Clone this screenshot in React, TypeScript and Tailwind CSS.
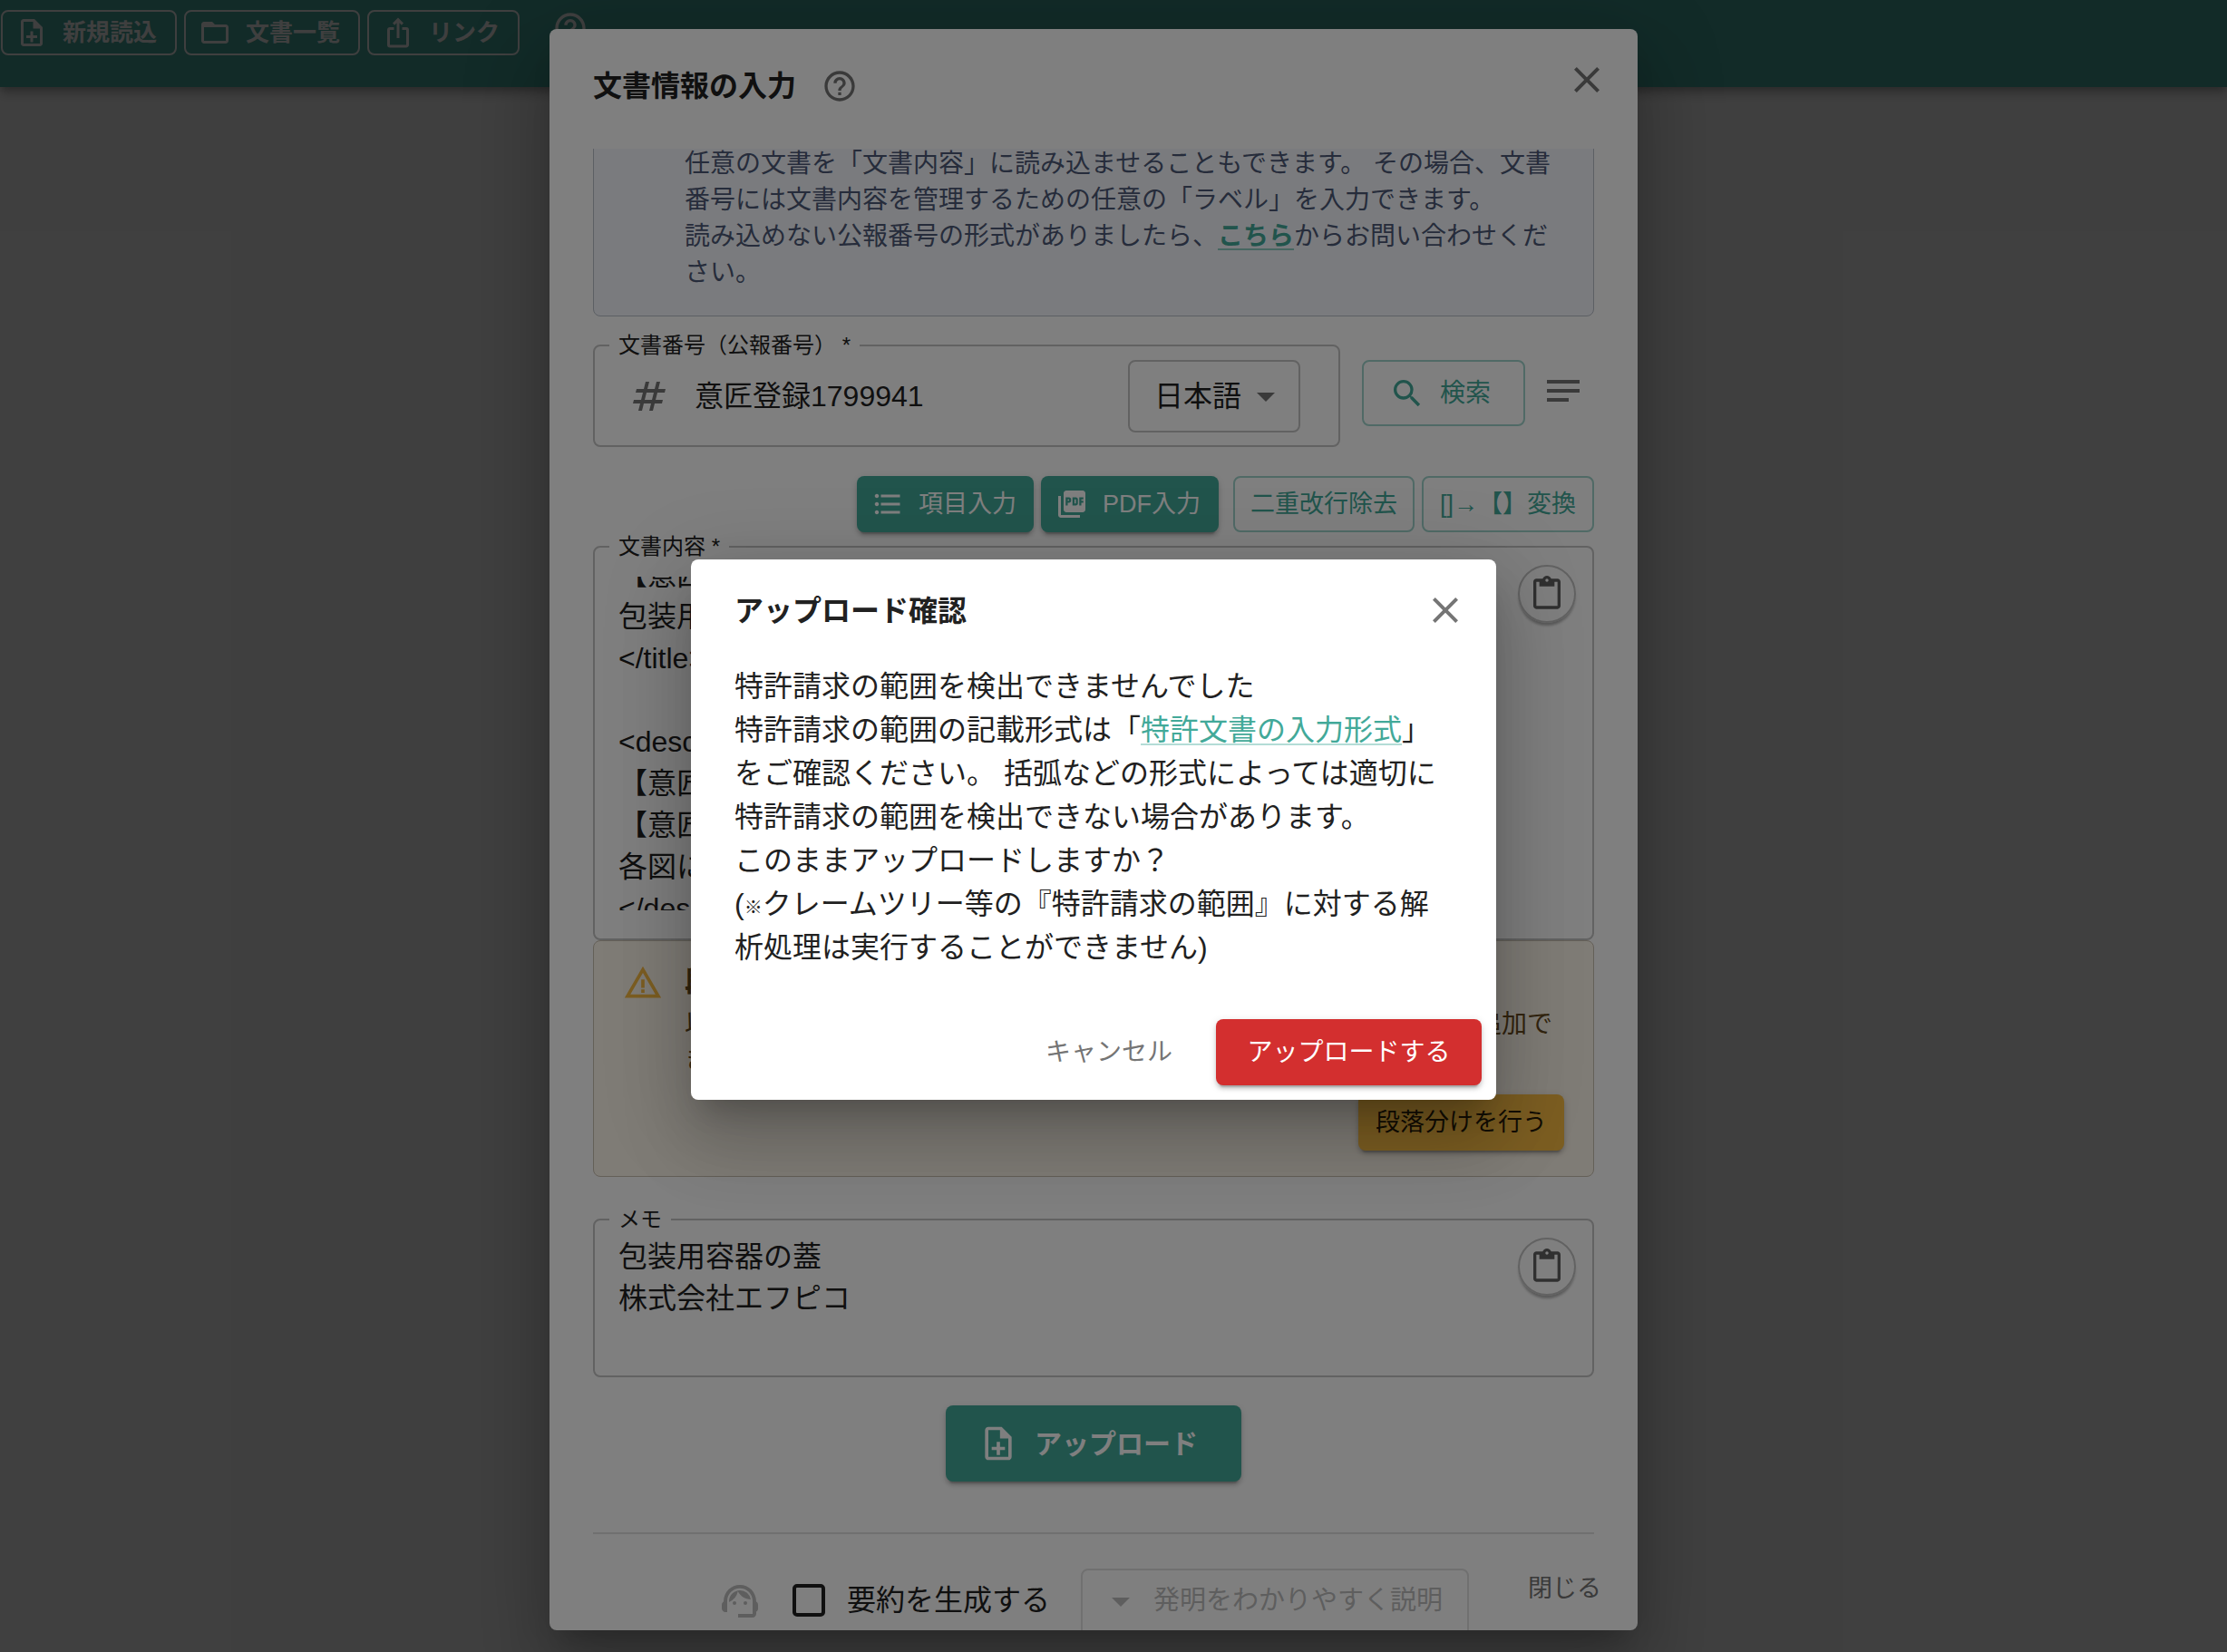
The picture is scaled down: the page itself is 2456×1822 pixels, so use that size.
import type { ReactNode } from "react";
import {
  MdArrowDropDown,
  MdClose,
  MdFolderOpen,
  MdFormatListBulleted,
  MdHelpOutline,
  MdIosShare,
  MdNotes,
  MdNumbers,
  MdOutlineContentPaste,
  MdOutlineNoteAdd,
  MdPictureAsPdf,
  MdSearch,
  MdSupportAgent,
  MdWarningAmber,
} from "react-icons/md";

const CONTENT = `【意匠に係る物品】
包装用容器の蓋
</title>

<description>
【意匠に係る物品の説明】
【意匠の説明】
各図において省略
</description>`;

const MEMO = `包装用容器の蓋
株式会社エフピコ`;

const PAPER_SHADOW =
  "shadow-[0px_22px_30px_-14px_rgba(0,0,0,0.2),0px_48px_76px_6px_rgba(0,0,0,0.14),0px_18px_92px_16px_rgba(0,0,0,0.12)]";
const BUTTON_SHADOW =
  "shadow-[0px_6px_2px_-4px_rgba(0,0,0,0.2),0px_4px_4px_0px_rgba(0,0,0,0.14),0px_2px_10px_0px_rgba(0,0,0,0.12)]";
const LINK =
  "text-[#42a999] underline decoration-2 underline-offset-4 [text-decoration-skip-ink:none]";

function HeaderButton({ icon, children }: { icon: ReactNode; children: ReactNode }) {
  return (
    <button className="flex h-[50px] items-center gap-4 rounded-lg border-2 border-white pl-[14px] pr-5 text-[26px] font-bold leading-none">
      {icon}
      <span>{children}</span>
    </button>
  );
}

function Field({
  id,
  label,
  className = "",
  children,
}: {
  id: string;
  label: string;
  className?: string;
  children: ReactNode;
}) {
  return (
    <fieldset className={`relative min-w-0 rounded-lg border-2 border-[#c4c4c4] px-4 ${className}`}>
      <legend className="px-[10px] text-[24px] leading-9">
        <label htmlFor={id}>{label}</label>
      </legend>
      {children}
    </fieldset>
  );
}

function PasteButton() {
  return (
    <button
      aria-label="貼り付け"
      className="mr-[2px] flex size-16 shrink-0 items-center justify-center rounded-full border-2 border-[#c4c4c4] text-[#616161] shadow-[0px_4px_3px_-1px_rgba(0,0,0,0.3)]"
    >
      <MdOutlineContentPaste className="size-10" />
    </button>
  );
}

function Header() {
  return (
    <header className="flex h-24 items-start gap-2 bg-[#48aca0] pl-[1px] pt-[11px] text-white shadow-[0px_4px_8px_-2px_rgba(0,0,0,0.2),0px_8px_10px_0px_rgba(0,0,0,0.14),0px_2px_20px_0px_rgba(0,0,0,0.12)]">
      <HeaderButton icon={<MdOutlineNoteAdd className="size-9" />}>新規読込</HeaderButton>
      <HeaderButton icon={<MdFolderOpen className="size-9" />}>文書一覧</HeaderButton>
      <HeaderButton icon={<MdIosShare className="size-9" />}>リンク</HeaderButton>
      <button aria-label="ヘルプ" className="ml-7">
        <MdHelpOutline className="size-10" />
      </button>
    </header>
  );
}

function DocumentDialog() {
  return (
    <section
      role="dialog"
      aria-label="文書情報の入力"
      className={`relative flex h-full w-full max-w-[1200px] flex-col overflow-hidden rounded-lg bg-white ${PAPER_SHADOW}`}
    >
      <div className="flex h-[132px] shrink-0 items-start justify-between pl-12 pr-8 pt-8">
        <div className="flex h-[62px] items-center gap-7">
          <h2 className="text-[32px] font-bold leading-[62px]">文書情報の入力</h2>
          <MdHelpOutline className="size-10 text-[#757575]" />
        </div>
        <button aria-label="閉じる" className="text-[#757575]">
          <MdClose className="size-12" />
        </button>
      </div>

      <div className="min-h-0 flex-1 overflow-hidden px-12">
        <div className="-mt-2 rounded-lg border border-[#b8bec8] bg-[#f4f7fd] pb-[27px] pl-[100px] pr-8 pt-1 text-[28px] leading-10 text-[#4d5876]">
          <p>
            任意の文書を「文書内容」に読み込ませることもできます。 その場合、文書番号には文書内容を管理するための任意の「ラベル」を入力できます。
            <br />
            読み込めない公報番号の形式がありましたら、
            <a href="#contact" className={`font-bold decoration-[#8fcdc3] ${LINK}`}>
              こちら
            </a>
            からお問い合わせください。
          </p>
        </div>

        <div className="mt-[14px] flex items-start">
          <Field id="doc-number" label="文書番号（公報番号） *" className="h-[130px] w-[824px]">
            <div className="-mt-[2px] flex items-center pl-5 pr-[26px]">
              <MdNumbers className="size-12 shrink-0 text-[#757575]" />
              <input
                id="doc-number"
                defaultValue="意匠登録1799941"
                className="ml-[26px] min-w-0 flex-1 bg-transparent text-[32px] leading-[46px] outline-none"
              />
              <div className="relative">
                <select
                  aria-label="言語"
                  className="h-20 w-[190px] appearance-none rounded-lg border-2 border-[#c4c4c4] bg-transparent pl-[27px] text-[32px] outline-none"
                >
                  <option>日本語</option>
                </select>
                <MdArrowDropDown className="pointer-events-none absolute right-[14px] top-4 size-12 text-[#757575]" />
              </div>
            </div>
          </Field>
          <button className="ml-6 mt-[34px] flex h-[73px] w-[180px] items-center justify-center gap-4 rounded-lg border-2 border-[#a0d4cc] pr-2 text-[28px] text-[#42a999]">
            <MdSearch className="size-10" />
            検索
          </button>
          <button aria-label="メニュー" className="ml-[18px] mt-11 text-[#757575]">
            <MdNotes className="size-12" />
          </button>
        </div>

        <div className="mt-8 flex h-[62px] justify-end text-[27px]">
          <button
            className={`flex w-[195px] items-center gap-4 rounded-lg bg-[#42a999] pl-4 text-white ${BUTTON_SHADOW}`}
          >
            <MdFormatListBulleted className="size-9" />
            項目入力
          </button>
          <button
            className={`ml-2 flex w-[196px] items-center gap-4 rounded-lg bg-[#42a999] pl-4 text-white ${BUTTON_SHADOW}`}
          >
            <MdPictureAsPdf className="size-9" />
            PDF入力
          </button>
          <button className="ml-4 w-[200px] rounded-lg border-2 border-[#a0d4cc] text-[#42a999]">
            二重改行除去
          </button>
          <button className="ml-2 w-[190px] rounded-lg border-2 border-[#a0d4cc] text-[#42a999]">
            []→【】変換
          </button>
        </div>

        <Field id="doc-content" label="文書内容 *" className="-mt-[2px] h-[452px]">
          <div className="flex items-start px-[10px]">
            <textarea
              id="doc-content"
              ref={(el) => {
                if (el) el.scrollTop = 25;
              }}
              defaultValue={CONTENT}
              className="mt-[15px] h-[368px] flex-1 resize-none overflow-hidden bg-transparent text-[32px] leading-[46px] outline-none"
            />
            <div className="-mr-[10px] mt-[2px]">
              <PasteButton />
            </div>
          </div>
        </Field>

        <div className="flex h-[261px] flex-col rounded-lg border border-[#c9c0b0] bg-[#fff8ec] pl-8 pr-8 text-[28px] leading-10 text-[#664a20]">
          <div className="flex gap-6 pt-6">
            <MdWarningAmber className="size-11 shrink-0 text-[#f8bc45]" />
            <div className="flex-1">
              <p className="text-[32px] font-bold">段落番号が見つかりません</p>
              <p className="mt-2">
                以下のボタンから本文の段落分けを行うことができます。 段落番号も追加できます。
              </p>
            </div>
          </div>
          <button
            className={`ml-auto mt-[17px] h-[62px] w-[227px] rounded-lg bg-[#f8bc45] text-[27px] leading-none text-black/87 ${BUTTON_SHADOW}`}
          >
            段落分けを行う
          </button>
        </div>

        <Field id="memo" label="メモ" className="mt-[29px] h-[192px]">
          <div className="flex items-start px-[10px]">
            <textarea
              id="memo"
              defaultValue={MEMO}
              className="h-36 flex-1 resize-none overflow-hidden bg-transparent text-[32px] leading-[46px] outline-none"
            />
            <div className="-mr-[10px] mt-[2px]">
              <PasteButton />
            </div>
          </div>
        </Field>

        <div className="mt-[31px] flex justify-center">
          <button
            className={`flex h-[84px] w-[326px] items-center justify-center gap-[18px] rounded-lg bg-[#42a999] pr-3 text-[30px] font-bold text-white ${BUTTON_SHADOW}`}
          >
            <MdOutlineNoteAdd className="size-11" />
            アップロード
          </button>
        </div>

        <hr className="mt-14 border-t-2 border-[#e0e0e0]" />

        <div className="ml-[138px] mt-[38px] flex items-start">
          <MdSupportAgent className="mt-3 size-12 text-[#bdbdbd]" />
          <label className="ml-[34px] mt-3 flex items-center gap-6 text-[32px] leading-[46px]">
            <input
              type="checkbox"
              className="size-9 appearance-none rounded-[5px] border-4 border-[#212121]"
            />
            要約を生成する
          </label>
          <button
            disabled
            className="ml-[34px] flex h-20 w-[428px] items-center rounded-lg border-2 border-[#e0e0e0] pb-2 pl-[18px] text-[29px] text-[#bdbdbd]"
          >
            <MdArrowDropDown className="mr-3 size-12" />
            発明をわかりやすく説明
          </button>
        </div>
      </div>

      <button className="absolute bottom-6 right-10 text-[27px] leading-[44px] text-[#757575]">
        閉じる
      </button>
    </section>
  );
}

function ConfirmDialog() {
  return (
    <section
      role="dialog"
      aria-label="アップロード確認"
      className={`w-full max-w-[888px] rounded-lg bg-white ${PAPER_SHADOW}`}
    >
      <div className="flex items-start justify-between pl-12 pr-8 pt-8">
        <h2 className="text-[32px] font-bold leading-[50px]">アップロード確認</h2>
        <button aria-label="閉じる" className="text-[#757575]">
          <MdClose className="size-12" />
        </button>
      </div>
      <p className="px-12 pt-[34px] text-[32px] leading-[48px]">
        特許請求の範囲を検出できませんでした
        <br />
        特許請求の範囲の記載形式は「
        <a href="#format" className={`decoration-[#b3dcd6] ${LINK}`}>
          特許文書の入力形式
        </a>
        」をご確認ください。 括弧などの形式によっては適切に特許請求の範囲を検出できない場合があります。
        <br />
        このままアップロードしますか？
        <br />
        (<span className="text-[20px] font-bold leading-none">※</span>
        クレームツリー等の『特許請求の範囲』に対する解析処理は実行することができません)
      </p>
      <div className="flex justify-end gap-8 px-4 pb-4 pt-[55px] text-[28px]">
        <button className="px-4 text-[#757575]">キャンセル</button>
        <button className={`h-[73px] w-[293px] rounded-lg bg-[#d32f2f] text-white ${BUTTON_SHADOW}`}>
          アップロードする
        </button>
      </div>
    </section>
  );
}

export default function App() {
  return (
    <div
      lang="ja"
      className="relative h-screen overflow-hidden bg-white font-['Liberation_Sans','Noto_Sans_CJK_JP',sans-serif] text-[#212121]"
    >
      <Header />
      <div className="absolute inset-0 flex items-center justify-center bg-black/50 pb-6 pr-11 pt-8">
        <DocumentDialog />
      </div>
      <div className="absolute inset-0 flex items-center justify-center bg-black/50 pb-6 pr-11 pt-8">
        <ConfirmDialog />
      </div>
    </div>
  );
}
